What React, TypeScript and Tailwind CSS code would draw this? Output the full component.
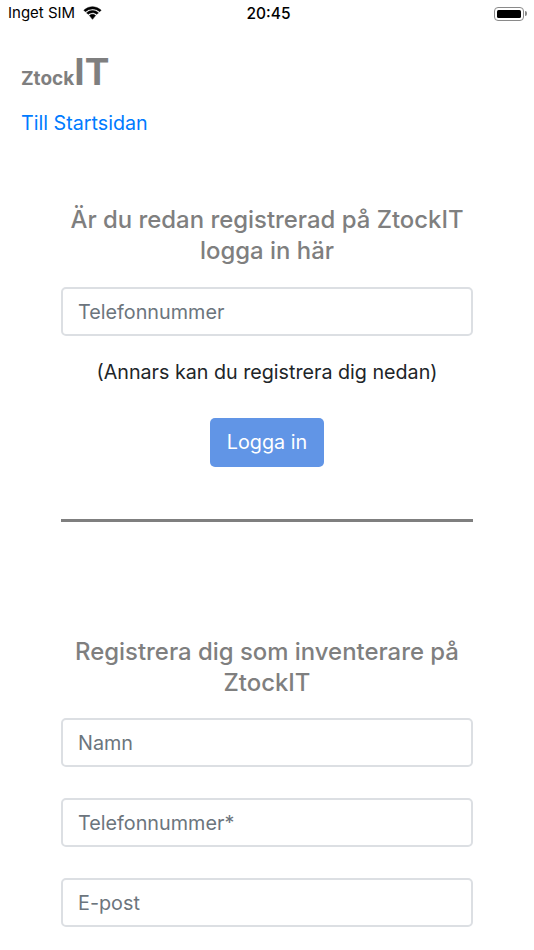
const Field = ({ placeholder }: { placeholder: string }) => (
  <input
    placeholder={placeholder}
    className="block w-full h-[49px] rounded-[5px] border-2 border-[#dcdfe3] bg-white px-[15px] text-[19.8px] text-[#6c757d] placeholder:text-[#6c757d] outline-none"
  />
);

export default function App() {
  return (
    <div className="h-[950px] overflow-hidden bg-white font-['Inter','Liberation_Sans',sans-serif]">
      {/* Status bar */}
      <div className="relative flex h-[27px] items-center justify-between pl-[8px] pr-[7px] text-[15px] text-black">
        <div className="flex items-center gap-[8px]">
          <span>Inget SIM</span>
          <svg width="19" height="14" viewBox="0 0 18 13" stroke="black" strokeWidth="0.5" className="-mt-[2px]">
            <path d="M9 2.6c2.6 0 5 1 6.8 2.7l1.4-1.5A12 12 0 0 0 9 .5 12 12 0 0 0 .8 3.8l1.4 1.5A10 10 0 0 1 9 2.6z" />
            <path d="M9 6.2c1.6 0 3 .6 4.2 1.6l1.4-1.5A8.300 8.300 0 0 0 9 4.100a8.300 8.300 0 0 0-5.600 2.200l1.400 1.500A6.300 6.300 0 0 1 9 6.200z" />
            <path d="M9 7.800c-1.100 0-2.100.4-2.900 1.100L9 12.500l2.900-3.600A4.400 4.400 0 0 0 9 7.800z" />
          </svg>
        </div>
        <span className="absolute left-[3px] right-0 text-center text-[15.5px] font-medium">20:45</span>
        <div className="flex items-center">
          <div className="h-[14px] w-[30px] rounded-[4px] border border-[#8a8a8a] p-[2px]">
            <div className="h-full w-full rounded-[1.5px] bg-black" />
          </div>
          <div className="ml-[1px] h-[5px] w-[2px] rounded-r bg-[#8a8a8a]" />
        </div>
      </div>

      {/* Logo */}
      <div className="mt-[21px] flex h-[48px] items-baseline pl-[21px] font-bold text-[#7f7f7f]">
        <span className="text-[19px]">Ztock</span>
        <span className="text-[37px] leading-[48px]">IT</span>
      </div>
      <a className="mt-[12px] block pl-[21px] text-[19.7px] leading-[30px] text-[#007bff]">Till Startsidan</a>

      <div className="mt-[66px] px-[61px]">
        <h2 className="text-center text-[23.9px] font-medium leading-[31px] text-[#7f7f7f]">
          Är du redan registrerad på ZtockIT logga in här
        </h2>
        <div className="mt-[21px]">
          <Field placeholder="Telefonnummer" />
        </div>
        <p className="mt-[21px] text-center text-[19.7px] leading-[31px] text-[#212529]">
          (Annars kan du registrera dig nedan)
        </p>
        <div className="mt-[30px] flex justify-center">
          <button className="h-[49px] w-[114px] rounded-[5px] bg-[#6195e6] text-[19.8px] text-white">Logga in</button>
        </div>
        <div className="mt-[52px] h-[3px] bg-[#7f7f7f]" />

        <h2 className="mt-[114px] text-center text-[23.9px] font-medium leading-[31px] text-[#7f7f7f]">
          Registrera dig som inventerare på ZtockIT
        </h2>
        <div className="mt-[20px] flex flex-col gap-[31px]">
          <Field placeholder="Namn" />
          <Field placeholder="Telefonnummer*" />
          <Field placeholder="E-post" />
        </div>
      </div>
    </div>
  );
}
